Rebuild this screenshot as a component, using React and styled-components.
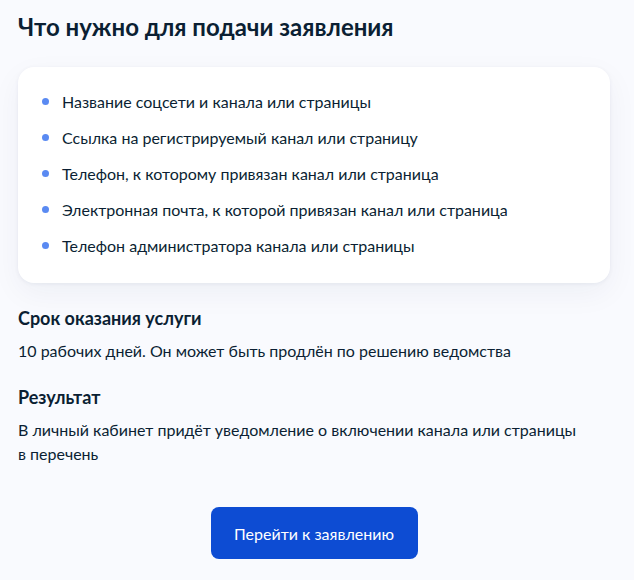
import React from 'react';
import styled, { createGlobalStyle } from 'styled-components';

const GlobalStyle = createGlobalStyle`
  html, body {
    margin: 0;
    padding: 0;
    background: #f9fafe;
  }
  body {
    font-family: Lato, "Noto Sans", sans-serif;
    color: #0b1f33;
  }
`;

const Page = styled.div`
  width: 592px;
  padding: 0 24px 0 18px;
`;

const Title = styled.h2`
  margin: 0;
  padding-top: 12px;
  font-size: 24px;
  line-height: 30px;
  font-weight: 700;
  color: #0b1f33;
`;

const Card = styled.div`
  margin-top: 25px;
  background: #ffffff;
  border-radius: 16px;
  box-shadow: 0 1px 4px rgba(17, 40, 82, 0.06), 0 10px 30px rgba(17, 40, 82, 0.05);
  padding: 23px 24px 25px 24px;
`;

const List = styled.ul`
  list-style: none;
  margin: 0;
  padding: 0;
  display: flex;
  flex-direction: column;
  gap: 12px;
`;

const Item = styled.li`
  position: relative;
  padding-left: 20px;
  font-size: 16px;
  line-height: 24px;
  color: #0b1f33;

  &::before {
    content: '';
    position: absolute;
    left: 0;
    top: 8px;
    width: 7px;
    height: 7px;
    border-radius: 50%;
    background: #5a8af2;
  }
`;

const Section = styled.section`
  margin-top: ${({ $first }) => ($first ? '23px' : '22px')};
`;

const SectionTitle = styled.h3`
  margin: 0;
  font-size: 18px;
  line-height: 24px;
  font-weight: 700;
`;

const SectionText = styled.p`
  margin: 9px 0 0;
  font-size: 16px;
  line-height: 24px;
  max-width: 570px;
`;

const Actions = styled.div`
  display: flex;
  justify-content: center;
  margin-top: 41px;
`;

const Button = styled.button`
  width: 207px;
  height: 52px;
  border: none;
  border-radius: 8px;
  background: #0d4cd3;
  color: #ffffff;
  font-family: Lato, "Noto Sans", sans-serif;
  font-size: 16px;
  cursor: pointer;
`;

const items = [
  'Название соцсети и канала или страницы',
  'Ссылка на регистрируемый канал или страницу',
  'Телефон, к которому привязан канал или страница',
  'Электронная почта, к которой привязан канал или страница',
  'Телефон администратора канала или страницы',
];

export default function App() {
  return (
    <>
      <GlobalStyle />
      <Page>
        <Title>Что нужно для подачи заявления</Title>
        <Card>
          <List>
            {items.map((t) => (
              <Item key={t}>{t}</Item>
            ))}
          </List>
        </Card>
        <Section $first>
          <SectionTitle>Срок оказания услуги</SectionTitle>
          <SectionText>10 рабочих дней. Он может быть продлён по решению ведомства</SectionText>
        </Section>
        <Section>
          <SectionTitle>Результат</SectionTitle>
          <SectionText>
            В личный кабинет придёт уведомление о включении канала или страницы в перечень
          </SectionText>
        </Section>
        <Actions>
          <Button>Перейти к заявлению</Button>
        </Actions>
      </Page>
    </>
  );
}
